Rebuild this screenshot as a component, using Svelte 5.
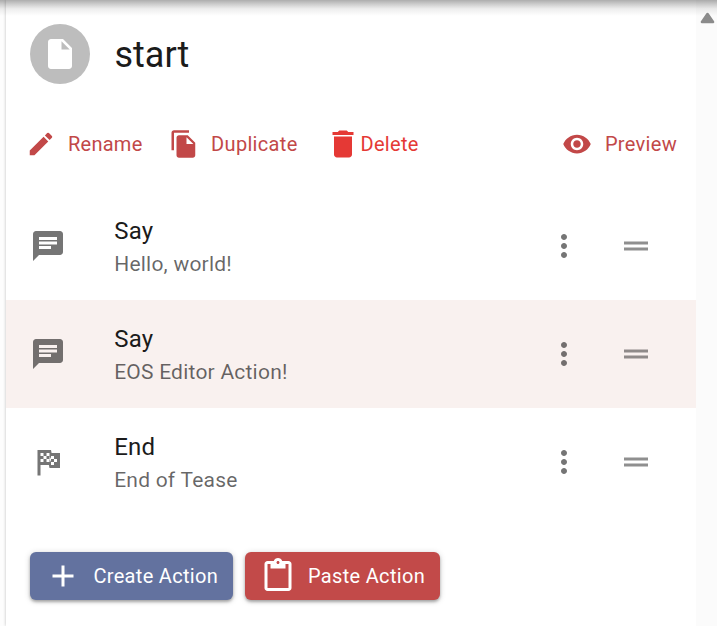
<script>
  const paths = {
    file: 'M6 2c-1.1 0-1.99.9-1.99 2L4 20c0 1.1.89 2 1.99 2H18c1.1 0 2-.9 2-2V8l-6-6H6zm7 7V3.5L18.5 9H13z',
    edit: 'M3 17.25V21h3.75L17.81 9.94l-3.75-3.75L3 17.25zM20.71 7.04c.39-.39.39-1.02 0-1.41l-2.34-2.34a.9959.9959 0 0 0-1.41 0l-1.83 1.83 3.75 3.75 1.83-1.83z',
    copy: 'M16 1H4c-1.1 0-2 .9-2 2v14h2V3h12V1zm-1 4l6 6v10c0 1.1-.9 2-2 2H7.99C6.89 23 6 22.1 6 21l.01-14c0-1.1.89-2 1.99-2h7zm-1 7h5.5L14 6.5V12z',
    trash: 'M6 19c0 1.1.9 2 2 2h8c1.1 0 2-.9 2-2V7H6v12zM19 4h-3.5l-1-1h-5l-1 1H5v2h14V4z',
    eye: 'M12 4.5C7 4.5 2.73 7.61 1 12c1.73 4.39 6 7.5 11 7.5s9.27-3.11 11-7.5c-1.73-4.39-6-7.5-11-7.5zM12 17c-2.76 0-5-2.24-5-5s2.24-5 5-5 5 2.24 5 5-2.24 5-5 5zm0-8c-1.66 0-3 1.34-3 3s1.34 3 3 3 3-1.34 3-3-1.34-3-3-3z',
    chat: 'M20 2H4c-1.1 0-1.99.9-1.99 2L2 22l4-4h14c1.1 0 2-.9 2-2V4c0-1.1-.9-2-2-2zM6 9h12v2H6V9zm8 5H6v-2h8v2zm4-6H6V6h12v2z',
    flag: 'M14.4 6H20v10h-7l-.4-2H7v7H5V4h9l.4 2zM14 14h2v-2h2v-2h-2V8h-2v2l-1-2V6h-2v2H9V6H7v2h2v2H7v2h2v-2h2v2h2v-2l1 2v2zm-3-4V8h2v2h-2zm3 0h2v2h-2v-2z',
    more: 'M12 8c1.1 0 2-.9 2-2s-.9-2-2-2-2 .9-2 2 .9 2 2 2zm0 2c-1.1 0-2 .9-2 2s.9 2 2 2 2-.9 2-2-.9-2-2-2zm0 6c-1.1 0-2 .9-2 2s.9 2 2 2 2-.9 2-2-.9-2-2-2z',
    drag: 'M20 9H4v2h16V9zM4 15h16v-2H4v2z',
    add: 'M19 13h-6v6h-2v-6H5v-2h6V5h2v6h6v2z',
    paste: 'M19 2h-4.18C14.4.84 13.3 0 12 0c-1.3 0-2.4.84-2.82 2H5c-1.1 0-2 .9-2 2v16c0 1.1.9 2 2 2h14c1.1 0 2-.9 2-2V4c0-1.1-.9-2-2-2zm-7 0c.55 0 1 .45 1 1s-.45 1-1 1-1-.45-1-1 .45-1 1-1zm7 18H5V4h2v3h10V4h2v16z'
  };
  const actions = [
    { icon: 'chat', title: 'Say', detail: 'Hello, world!' },
    { icon: 'chat', title: 'Say', detail: 'EOS Editor Action!', selected: true },
    { icon: 'flag', title: 'End', detail: 'End of Tease' }
  ];
</script>

{#snippet icon(name, kind = '')}
  <svg class="icon {kind}" viewBox="0 0 24 24" aria-hidden="true"><path d={paths[name]} /></svg>
{/snippet}

<div class="page">
  <main class="panel">
    <header>
      <div class="avatar">{@render icon('file')}</div>
      <h1>start</h1>
    </header>

    <div class="toolbar">
      <button class="tool rename">{@render icon('edit', 'small')}<span>Rename</span></button>
      <button class="tool duplicate">{@render icon('copy', 'small')}<span>Duplicate</span></button>
      <button class="tool delete">{@render icon('trash')}<span>Delete</span></button>
      <button class="tool preview">{@render icon('eye', 'small')}<span>Preview</span></button>
    </div>

    <ul>
      {#each actions as action}
        <li class:selected={action.selected}>
          {@render icon(action.icon)}
          <div class="text">
            <div class="primary">{action.title}</div>
            <div class="secondary">{action.detail}</div>
          </div>
          {@render icon('more')}
          {@render icon('drag', 'handle')}
        </li>
      {/each}
    </ul>

    <footer>
      <button class="raised create">{@render icon('add')}<span>Create Action</span></button>
      <button class="raised paste">{@render icon('paste')}<span>Paste Action</span></button>
    </footer>
  </main>
  <div class="scrollbar">
    <svg viewBox="0 0 15 12" aria-hidden="true"><path d="M7.5 2L13 10H2z" /></svg>
  </div>
  <div class="shade"></div>
</div>

<style>
  :global(body) { margin: 0; overflow: hidden; }
  .page {
    position: relative;
    display: flex;
    width: 717px;
    height: 626px;
    box-sizing: border-box;
    padding-left: 6px;
    overflow: hidden;
    background: #fdfdfd;
    font-family: Roboto, "Liberation Sans", sans-serif;
    color: #1b1b1b;
  }
  .panel {
    width: 690px;
    flex: none;
    background: #fff;
    box-shadow: 0 0 3px rgba(0, 0, 0, 0.25);
  }
  .icon { display: block; flex: none; width: 36px; height: 36px; fill: currentColor; }
  .small { width: 30px; height: 30px; }
  header { display: flex; align-items: center; gap: 24.5px; padding: 24px 24px 0; }
  .avatar {
    display: grid;
    place-items: center;
    width: 60px;
    height: 60px;
    border-radius: 50%;
    background: #bdbdbd;
    color: #fff;
  }
  h1 { margin: 0; padding-top: 1px; font-size: 36px; font-weight: 400; line-height: 48px; letter-spacing: 0; }
  button {
    display: flex;
    align-items: center;
    border: 0;
    padding: 0;
    background: none;
    font: 400 20px/36px Roboto, "Liberation Sans", sans-serif;
    letter-spacing: 0.32px;
    white-space: nowrap;
  }
  .toolbar { display: flex; align-items: center; height: 54px; margin-top: 33px; padding: 0 19px 0 20px; }
  .tool { color: #c24848; gap: 12px; }
  .rename { letter-spacing: 0.25px; }
  .duplicate { margin-left: 26.6px; }
  .delete { gap: 0; margin-left: 27.4px; color: #e53935; }
  .delete .icon { margin-right: -0.5px; }
  .preview { margin-left: auto; gap: 12.5px; }
  ul { margin: 21px 0 0; padding: 0; list-style: none; }
  li { display: flex; align-items: center; height: 108px; box-sizing: border-box; padding: 0 42px 0 24px; }
  li .icon { color: #757575; }
  li .handle { margin-left: 36px; color: #8f8f8f; }
  .selected { background: #f9f1ef; }
  .selected .icon { color: #736f6e; }
  .selected .handle { color: #8f8a89; }
  .text { flex: 1; margin-left: 48.2px; }
  .primary { font-size: 24px; line-height: 36px; letter-spacing: 0.225px; }
  .secondary { font-size: 21px; line-height: 30px; letter-spacing: 0.225px; color: rgba(0, 0, 0, 0.6); }
  footer { display: flex; gap: 12px; margin-top: 36px; padding-left: 24px; }
  .raised {
    height: 48px;
    border-radius: 6px;
    color: #fff;
    box-shadow: 0 2px 3px rgba(0, 0, 0, 0.28), 0 1px 6px rgba(0, 0, 0, 0.17);
  }
  .create { width: 203px; gap: 12.4px; padding-left: 15px; background: #63729f; }
  .paste { width: 195px; gap: 12px; padding-left: 15px; background: #c24a49; }
  .scrollbar { flex: 1; background: #fbfbfb; }
  .scrollbar svg { display: block; width: 15px; height: 12px; margin: 12px 0 0 4px; fill: #8b8b8b; stroke: #8b8b8b; stroke-width: 2.6; stroke-linejoin: round; }
  .shade {
    position: absolute;
    inset: 0 0 auto;
    height: 16px;
    background: linear-gradient(rgba(0, 0, 0, 0.32), rgba(0, 0, 0, 0.2) 25%, rgba(0, 0, 0, 0.07) 55%, transparent);
    pointer-events: none;
  }
</style>
